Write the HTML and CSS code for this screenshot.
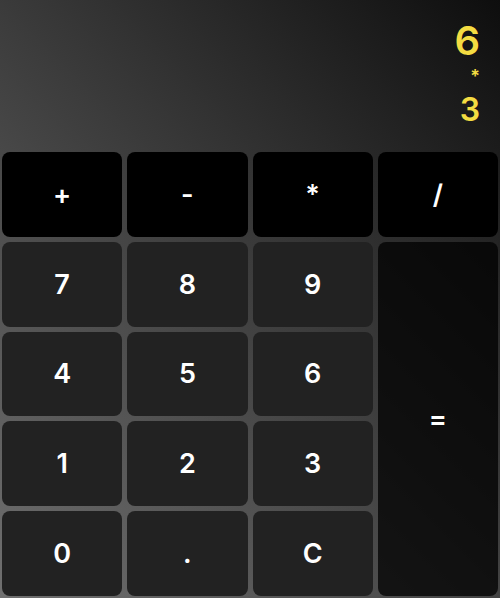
FILE: index.html
```html
<!DOCTYPE html>
<html lang="en">
<head>
<meta charset="utf-8">
<title>Calculator</title>
<link rel="stylesheet" href="styles.css">
</head>
<body>
<div class="calc">
  <div class="display">
    <div class="prev">6</div>
    <div class="op">*</div>
    <div class="cur">3</div>
  </div>
  <div class="keys">
    <button class="key key-op">+</button>
    <button class="key key-op">-</button>
    <button class="key key-op">*</button>
    <button class="key key-op">/</button>
    <button class="key">7</button>
    <button class="key">8</button>
    <button class="key">9</button>
    <button class="key key-eq">=</button>
    <button class="key">4</button>
    <button class="key">5</button>
    <button class="key">6</button>
    <button class="key">1</button>
    <button class="key">2</button>
    <button class="key">3</button>
    <button class="key">0</button>
    <button class="key">.</button>
    <button class="key">C</button>
  </div>
</div>
</body>
</html>
```
FILE: styles.css
```css
* { box-sizing: border-box; }
html, body { margin: 0; padding: 0; height: 100%; }
body {
  background: linear-gradient(45deg, #707070, #0e0e0e);
  font-family: "Inter", "Noto Sans", sans-serif;
  overflow: hidden;
}
.calc {
  display: flex;
  flex-direction: column;
  height: 598px;
}
.display {
  height: 150px;
  display: flex;
  flex-direction: column;
  align-items: flex-end;
  padding: 18px 20px 0 0;
  color: #f4dc42;
  font-weight: 600;
}
.prev { font-size: 40px; line-height: 46px; }
.op { font-size: 18px; line-height: 26px; }
.cur { font-size: 32px; line-height: 40px; }
.keys {
  flex: 1;
  display: grid;
  grid-template-columns: repeat(4, 1fr);
  grid-template-rows: repeat(5, 1fr);
  gap: 5px;
  padding: 2px;
}
.key {
  border: none;
  border-radius: 8px;
  background: #222222;
  color: #ffffff;
  font-family: "Inter", "Noto Sans", sans-serif;
  font-weight: 600;
  font-size: 27px;
  padding: 0;
}
.key-op { background: #000000; }
.key-eq {
  grid-column: 4;
  grid-row: 2 / span 4;
  background: rgba(0, 0, 0, 0.75);
}
```
